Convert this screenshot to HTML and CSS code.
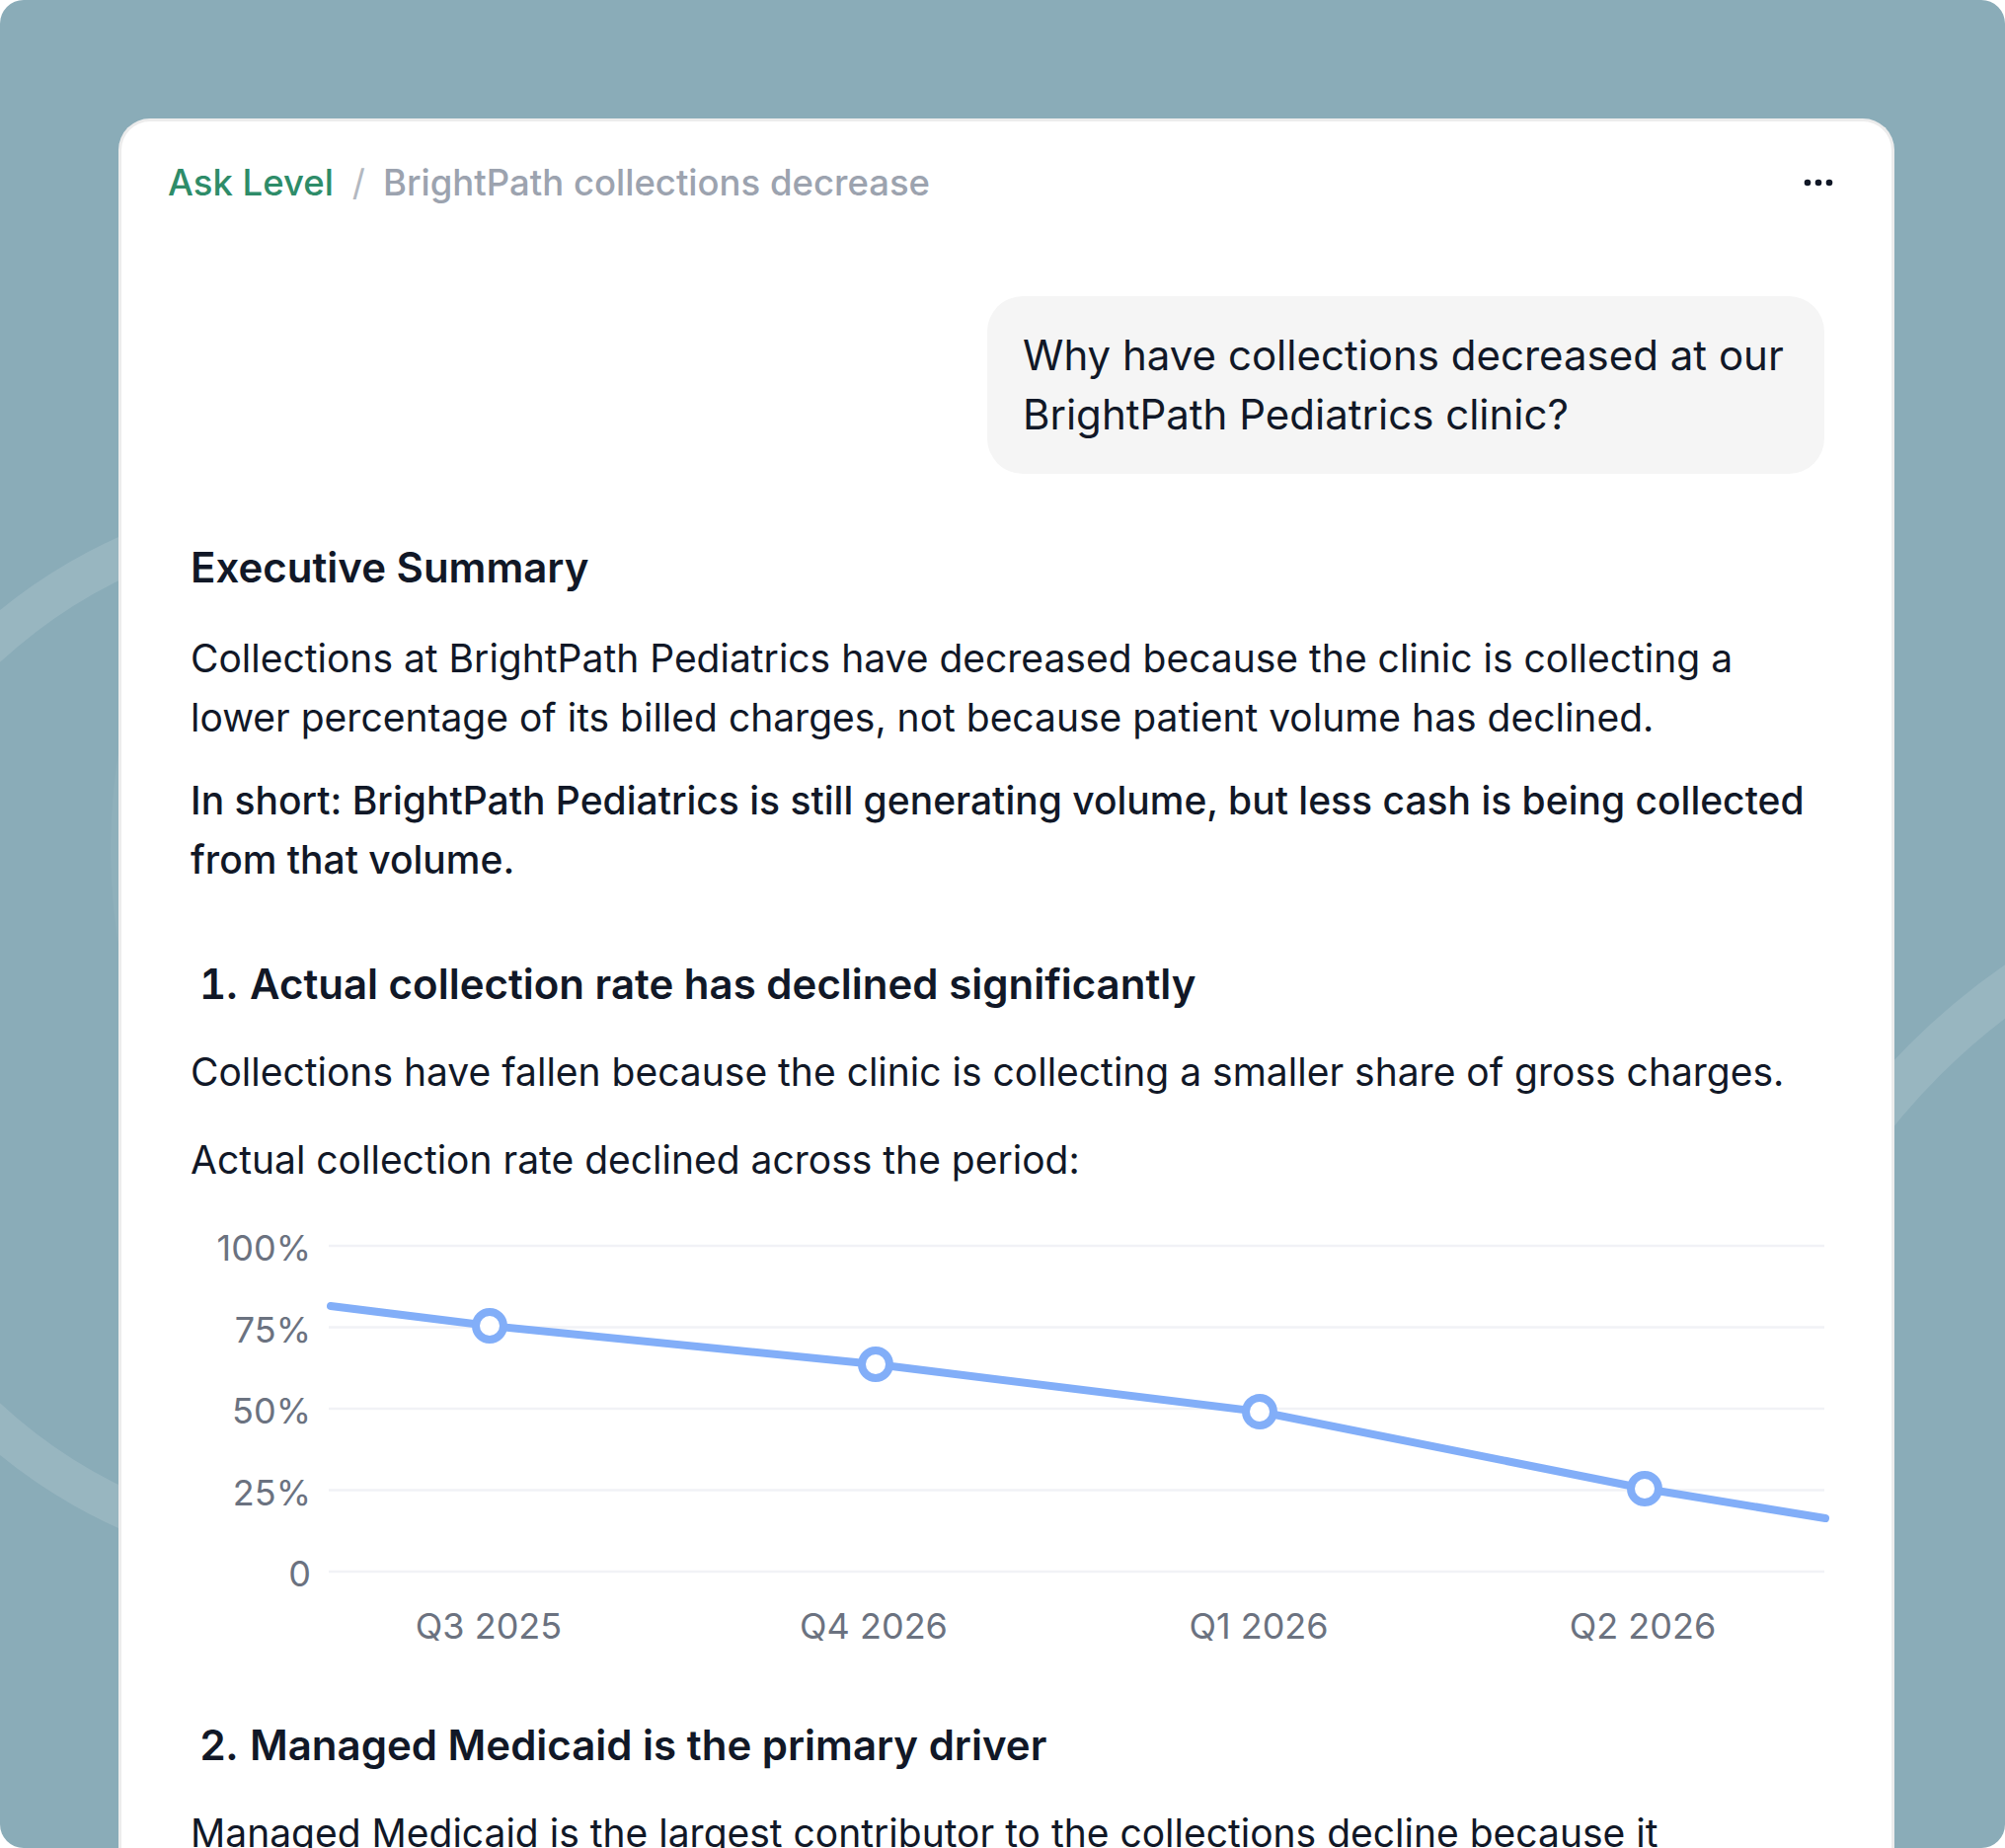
FILE: index.html
```html
<!DOCTYPE html>
<html lang="en">
<head>
<meta charset="utf-8">
<title>Ask Level – BrightPath collections decrease</title>
<link rel="stylesheet" href="styles.css">
</head>
<body>
<div class="frame">
  <svg class="frame-rings" width="2031" height="1872" viewBox="0 0 2031 1872" aria-hidden="true">
    <circle cx="712" cy="860" r="600" fill="rgba(255,255,255,0.05)"/>
    <circle cx="347" cy="1046" r="531" fill="none" stroke="rgba(255,255,255,0.12)" stroke-width="40"/>
    <circle cx="2425" cy="1550" r="673" fill="none" stroke="rgba(255,255,255,0.12)" stroke-width="44"/>
  </svg>

  <main class="card">
    <header class="card-header">
      <nav class="crumbs">
        <a class="crumb-root" href="#">Ask Level</a>
        <span class="crumb-sep">/</span>
        <span class="crumb-current">BrightPath collections decrease</span>
      </nav>
      <button class="more-btn" type="button" aria-label="More options">
        <svg width="30" height="10" viewBox="0 0 30 10"><circle cx="4" cy="5" r="3.3"/><circle cx="15" cy="5" r="3.3"/><circle cx="26" cy="5" r="3.3"/></svg>
      </button>
    </header>

    <section class="thread">
      <div class="question">Why have collections decreased at our BrightPath Pediatrics clinic?</div>

      <article class="answer">
        <h2 class="answer-title">Executive Summary</h2>
        <p class="answer-text">Collections at BrightPath Pediatrics have decreased because the clinic is collecting a lower percentage of its billed charges, not because patient volume has declined.</p>
        <p class="answer-text answer-strong">In short: BrightPath Pediatrics is still generating volume, but less cash is being collected from that volume.</p>

        <h3 class="point-title"><span class="point-num">1.</span><span>Actual collection rate has declined significantly</span></h3>
        <p class="answer-text point-text">Collections have fallen because the clinic is collecting a smaller share of gross charges.</p>
        <p class="answer-text point-text">Actual collection rate declined across the period:</p>

        <svg class="rate-chart" width="1655" height="460" viewBox="0 0 1655 460">
          <g class="grid">
            <line x1="140" y1="31" x2="1655" y2="31"/>
            <line x1="140" y1="113.5" x2="1655" y2="113.5"/>
            <line x1="140" y1="196" x2="1655" y2="196"/>
            <line x1="140" y1="278.5" x2="1655" y2="278.5"/>
            <line x1="140" y1="361" x2="1655" y2="361"/>
          </g>
          <g class="axis-y">
            <text x="122" y="46">100%</text>
            <text x="122" y="128.5">75%</text>
            <text x="122" y="211">50%</text>
            <text x="122" y="293.5">25%</text>
            <text x="122" y="376">0</text>
          </g>
          <g class="axis-x">
            <text x="302" y="429">Q3 2025</text>
            <text x="692" y="429">Q4 2026</text>
            <text x="1082" y="429">Q1 2026</text>
            <text x="1471" y="429">Q2 2026</text>
          </g>
          <polyline class="series" points="142,92 303,112 694,151 1083,199 1473,277 1656,307"/>
          <g class="dots">
            <circle cx="303" cy="112" r="14"/>
            <circle cx="694" cy="151" r="14"/>
            <circle cx="1083" cy="199" r="14"/>
            <circle cx="1473" cy="277" r="14"/>
          </g>
        </svg>

        <h3 class="point-title point-second"><span class="point-num">2.</span><span>Managed Medicaid is the primary driver</span></h3>
        <p class="answer-text point-text">Managed Medicaid is the largest contributor to the collections decline because it</p>
      </article>
    </section>
  </main>
</div>
</body>
</html>
```

FILE: styles.css
```css
* {
  box-sizing: border-box;
}

html,
body {
  margin: 0;
  padding: 0;
  background: #ffffff;
}

body {
  font-family: Inter, "Noto Sans", "Liberation Sans", sans-serif;
  color: #111827;
  -webkit-font-smoothing: antialiased;
}

.frame {
  position: relative;
  width: 2031px;
  height: 1872px;
  overflow: hidden;
  border-radius: 24px;
  background: #8aacb8;
  padding: 120px 112px 0 120px;
}

.frame-rings {
  position: absolute;
  left: 0;
  top: 0;
}

.card {
  position: relative;
  background: #ffffff;
  border: 3px solid #ececec;
  border-bottom: 0;
  border-radius: 32px 32px 0 0;
  min-height: 1800px;
}

/* header with breadcrumb and overflow menu */
.card-header {
  display: flex;
  align-items: center;
  justify-content: space-between;
  height: 60px;
  margin-top: 32px;
  padding: 0 59px 0 47px;
}

.crumbs {
  display: flex;
  align-items: center;
  font-size: 36.5px;
  font-weight: 500;
  line-height: 60px;
}

.crumb-root {
  color: #2e8c69;
  text-decoration: none;
}

.crumb-sep {
  color: #b3b8c0;
  font-weight: 400;
  margin: 0 18px 0 19px;
}

.crumb-current {
  color: #9ca3af;
}

.more-btn {
  display: flex;
  border: 0;
  padding: 0;
  background: none;
  fill: #111827;
  cursor: pointer;
}

/* conversation */
.thread {
  display: flex;
  flex-direction: column;
  padding: 85px 68px 0 70px;
}

.question {
  align-self: flex-end;
  width: 848px;
  background: #f5f5f5;
  border-radius: 36px;
  padding: 30px 36px;
  font-size: 42px;
  line-height: 60px;
  color: #111827;
}

.answer {
  display: flex;
  flex-direction: column;
}

.answer-title {
  margin: 65px 0 0;
  font-size: 42px;
  font-weight: 600;
  line-height: 60px;
}

.answer-text {
  margin: 32px 0 0;
  font-size: 39px;
  line-height: 60px;
  font-weight: 400;
}

.answer-strong {
  margin-top: 24px;
  font-weight: 500;
}

.point-title {
  display: flex;
  margin: 66px 0 0;
  padding-left: 9px;
  font-size: 42px;
  font-weight: 600;
  line-height: 60px;
}

.point-num {
  flex: none;
  width: 51px;
  font-variant-numeric: tabular-nums;
}

.point-text {
  margin-top: 29px;
}

.rate-chart {
  display: block;
  margin-top: 26px;
  overflow: visible;
}

.grid line {
  stroke: #f1f2f6;
  stroke-width: 2.5;
}

.axis-y text,
.axis-x text {
  font-family: Inter, "Noto Sans", sans-serif;
  font-size: 36px;
  fill: #6b7280;
}

.axis-y text {
  text-anchor: end;
}

.axis-x text {
  text-anchor: middle;
}

.series {
  fill: none;
  stroke: #82aef8;
  stroke-width: 8;
  stroke-linecap: round;
  stroke-linejoin: round;
}

.dots circle {
  fill: #ffffff;
  stroke: #82aef8;
  stroke-width: 8;
}

.point-second {
  margin-top: 47px;
}
```
